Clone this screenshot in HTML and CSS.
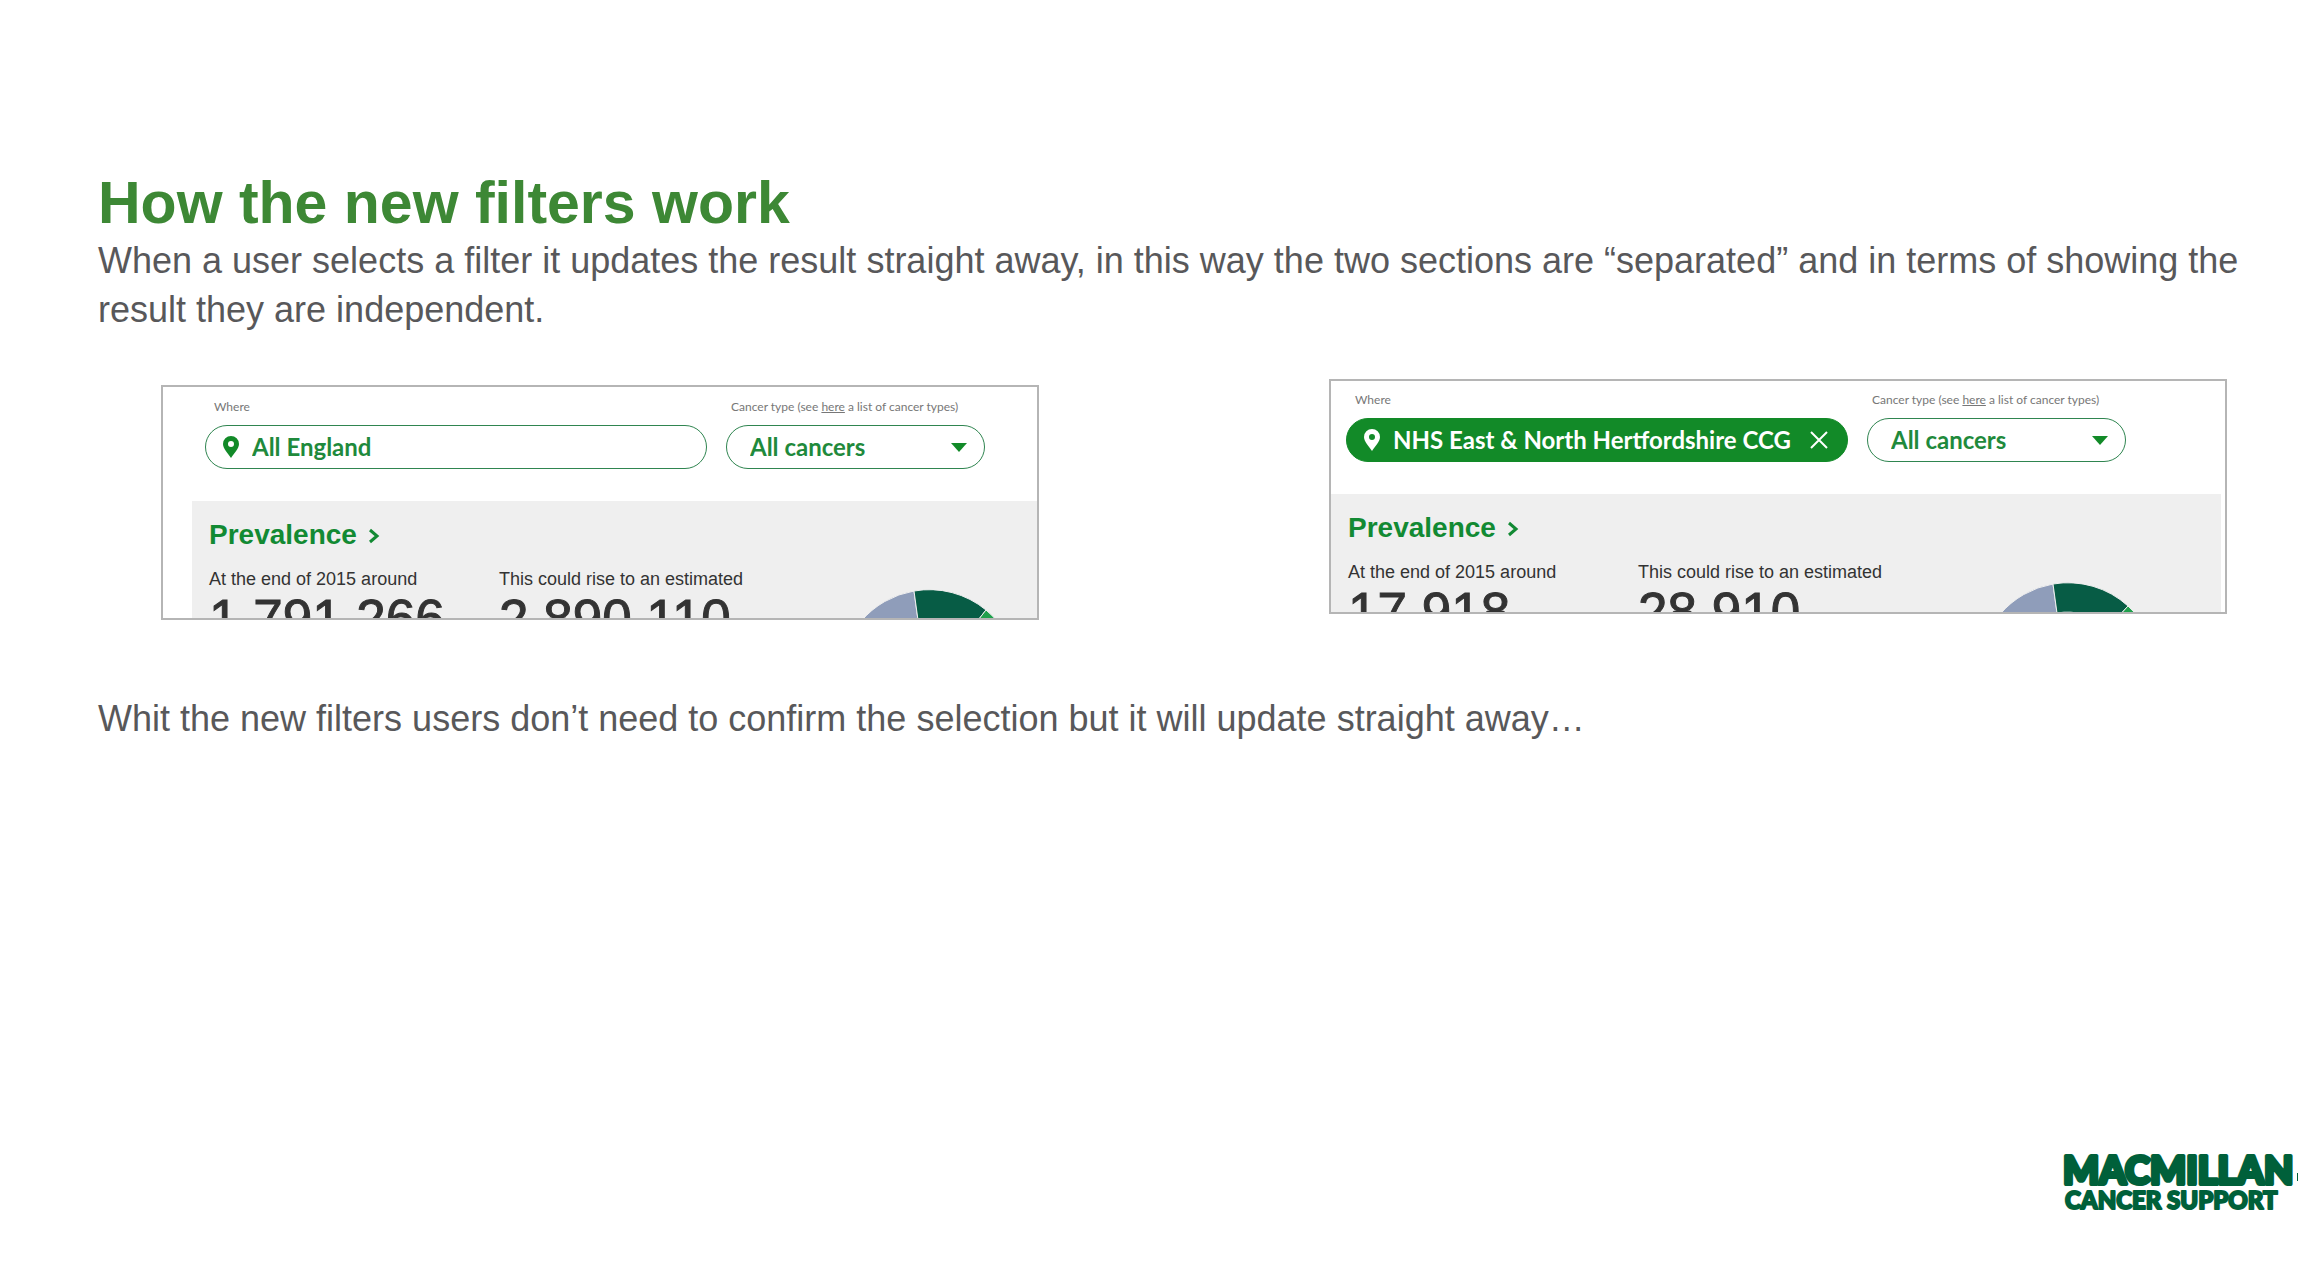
FILE: index.html
```
<!DOCTYPE html>
<html lang="en">
<head>
    <meta charset="UTF-8">
    <meta name="viewport" content="width=device-width, initial-scale=1.0">
    <title>How the new filters work</title>
    <link rel="stylesheet" href="styles.css">
</head>
<body>

<main class="slide">
    <h1>How the new filters work</h1>
    <p class="copy">When a user selects a filter it updates the result straight away, in this way the two sections are “separated” and in terms of showing the result they are independent.</p>

    <div class="examples">
        <section class="card card-before">
            <div class="filters">
                <div class="field field-where">
                    <label for="where-before">Where</label>
                    <div class="pill">
                        <svg class="pin" viewBox="0 0 16 22"><path fill-rule="evenodd" d="M8 0a8 8 0 0 1 8 8c0 5-5 9-8 14C5 17 0 13 0 8a8 8 0 0 1 8-8zm0 5a3 3 0 1 0 0 6 3 3 0 0 0 0-6z"/></svg>
                        <input type="text" id="where-before" value="All England">
                    </div>
                </div>
                <div class="field field-type">
                    <label for="type-before">Cancer type (see <a href="#">here</a> a list of cancer types)</label>
                    <div class="pill">
                        <select id="type-before"><option>All cancers</option></select>
                        <svg class="arrow" viewBox="0 0 16 9"><path d="M0 0h16L8 9z"/></svg>
                    </div>
                </div>
            </div>
            <div class="results">
                <h2><a href="#">Prevalence <svg class="chevron" viewBox="0 0 12 16"><path d="M2 2l7 6-7 6"/></svg></a></h2>
                <div class="stats">
                    <div class="stat">
                        <p>At the end of 2015 around</p>
                        <strong>1,791,266</strong>
                    </div>
                    <div class="stat">
                        <p>This could rise to an estimated</p>
                        <strong>2,890,110</strong>
                    </div>
                    <svg class="donut" viewBox="0 0 180 180">
                        <path class="slice-blue" d="M1 90A89 89 0 0 1 75 2L79 31A60 60 0 0 0 30 90z"/>
                        <path class="slice-dark" d="M75 2A89 89 0 0 1 147 21L129 44A60 60 0 0 0 79 31z"/>
                        <path class="slice-green" d="M147 21A89 89 0 0 1 179 90L150 90A60 60 0 0 0 129 44z"/>
                    </svg>
                </div>
            </div>
        </section>

        <section class="card card-after">
            <div class="filters">
                <div class="field field-where">
                    <label for="where-after">Where</label>
                    <div class="pill pill-selected">
                        <svg class="pin" viewBox="0 0 16 22"><path fill-rule="evenodd" d="M8 0a8 8 0 0 1 8 8c0 5-5 9-8 14C5 17 0 13 0 8a8 8 0 0 1 8-8zm0 5a3 3 0 1 0 0 6 3 3 0 0 0 0-6z"/></svg>
                        <input type="text" id="where-after" value="NHS East &amp; North Hertfordshire CCG">
                        <button type="button" class="clear" aria-label="Clear">
                            <svg viewBox="0 0 18 18"><path d="M1 1l16 16M17 1L1 17"/></svg>
                        </button>
                    </div>
                </div>
                <div class="field field-type">
                    <label for="type-after">Cancer type (see <a href="#">here</a> a list of cancer types)</label>
                    <div class="pill">
                        <select id="type-after"><option>All cancers</option></select>
                        <svg class="arrow" viewBox="0 0 16 9"><path d="M0 0h16L8 9z"/></svg>
                    </div>
                </div>
            </div>
            <div class="results">
                <h2><a href="#">Prevalence <svg class="chevron" viewBox="0 0 12 16"><path d="M2 2l7 6-7 6"/></svg></a></h2>
                <div class="stats">
                    <div class="stat">
                        <p>At the end of 2015 around</p>
                        <strong>17,918</strong>
                    </div>
                    <div class="stat">
                        <p>This could rise to an estimated</p>
                        <strong>28,910</strong>
                    </div>
                    <svg class="donut" viewBox="0 0 180 180">
                        <path class="slice-blue" d="M1 90A89 89 0 0 1 75 2L79 31A60 60 0 0 0 30 90z"/>
                        <path class="slice-dark" d="M75 2A89 89 0 0 1 150 24L130 46A60 60 0 0 0 79 31z"/>
                        <path class="slice-green" d="M150 24A89 89 0 0 1 179 90L150 90A60 60 0 0 0 130 46z"/>
                    </svg>
                </div>
            </div>
        </section>
    </div>

    <p class="copy">Whit the new filters users don’t need to confirm the selection but it will update straight away…</p>

    <footer>
        <svg class="logo" viewBox="0 0 240 60">
            <text class="logo-name" x="5" y="32">MACMILLAN</text>
            <text class="logo-sub" x="7" y="57">CANCER SUPPORT</text>
            <path d="M239 21h1v8h-1z"/>
        </svg>
    </footer>
</main>

</body>
</html>
```
FILE: styles.css
```
* {
    box-sizing: border-box;
}

body {
    font-family: "Liberation Sans", Arial, sans-serif;
    margin: 0;
    background-color: #fff;
    color: #58585a;
}

h1, h2, p {
    margin: 0;
}

.slide {
    display: flex;
    flex-direction: column;
    min-height: 100vh;
    padding: 170px 24px 54px 98px;
}

h1 {
    color: #3d8835;
    font-size: 59px;
    line-height: 66px;
}

.copy {
    font-size: 36px;
    line-height: 49px;
    padding-right: 40px;
}

.examples {
    display: flex;
    justify-content: space-between;
    align-items: flex-start;
    margin: 45px 71px 74px 63px;
}

.card {
    display: flex;
    flex-direction: column;
    height: 235px;
    border: 2px solid #b5b5b5;
    overflow: hidden;
}

.card-before {
    flex: 0 1 878px;
    margin-top: 6px;
}

.card-after {
    flex: 0 1 898px;
}

.filters {
    display: flex;
    gap: 19px;
    padding: 12px 0 32px 42px;
}

.card-after .filters {
    padding-top: 11px;
    padding-left: 15px;
}

.field-where {
    width: 502px;
}

.field-type {
    width: 259px;
}

.field label {
    display: block;
    padding: 0 0 10px 9px;
    font-family: Lato, sans-serif;
    font-size: 12px;
    line-height: 16px;
    color: #777;
}

.field-type label {
    padding-left: 5px;
}

.field label a {
    color: inherit;
}

.pill {
    display: flex;
    align-items: center;
    height: 44px;
    padding: 0 17px;
    border: 1px solid #2f8550;
    border-radius: 22px;
    color: #1f8a3c;
}

.pill input,
.pill select {
    flex: 1;
    min-width: 0;
    padding: 0 0 2px;
    border: none;
    outline: none;
    appearance: none;
    background: none;
    color: inherit;
    font-family: Lato, sans-serif;
    font-size: 24px;
    font-weight: bold;
}

.pill input {
    margin-left: 13px;
}

.field-type .pill {
    padding-left: 23px;
}

.pill-selected {
    background-color: #128a28;
    border-color: #128a28;
    color: #fff;
}

.pin {
    width: 16px;
    height: 22px;
    fill: #128a28;
}

.pill-selected .pin {
    fill: #fff;
}

.arrow {
    width: 16px;
    height: 9px;
    fill: #128a28;
}

.clear {
    display: flex;
    padding: 0 2px;
    border: none;
    background: none;
    cursor: pointer;
}

.clear svg {
    width: 18px;
    height: 18px;
    stroke: #fff;
    stroke-width: 2;
}

.results {
    flex: 1;
    min-height: 0;
    margin-left: 29px;
    padding: 16px 0 0 17px;
    background-color: #efefef;
}

.card-after .results {
    margin: 0 4px 0 0;
}

.results h2 {
    font-size: 28px;
    line-height: 36px;
}

.results h2 a {
    color: #128a33;
    text-decoration: none;
}

.chevron {
    width: 12px;
    height: 16px;
    margin-left: 3px;
    fill: none;
    stroke: #128a33;
    stroke-width: 3;
}

.stats {
    display: flex;
    margin-top: 16px;
    color: #333;
}

.stat {
    width: 290px;
}

.stat p {
    font-size: 18px;
    line-height: 20px;
    white-space: nowrap;
}

.stat strong {
    display: block;
    font-size: 53px;
    font-weight: normal;
    line-height: 60px;
    -webkit-text-stroke: 1px #333;
}

.donut {
    flex: none;
    width: 180px;
    height: 180px;
    margin: 20px 0 0 50px;
}

.donut path {
    stroke: #efefef;
    stroke-width: 1;
}

.slice-blue {
    fill: #8f9dba;
}

.slice-dark {
    fill: #075c45;
}

.slice-green {
    fill: #1fa04c;
}

footer {
    display: flex;
    justify-content: flex-end;
    margin-top: auto;
}

.logo {
    width: 240px;
    height: 60px;
    fill: #00603a;
}

.logo text {
    font-family: Lato, sans-serif;
    font-weight: 900;
    stroke: #00603a;
    stroke-linejoin: round;
}

.logo-name {
    font-size: 38px;
    stroke-width: 4;
}

.logo-sub {
    font-size: 24px;
    stroke-width: 2;
}
```
